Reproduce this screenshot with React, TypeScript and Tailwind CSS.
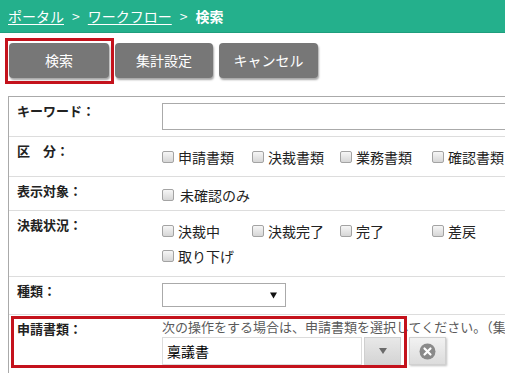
import React from "react";

const FONT = "font-['Noto_Sans_CJK_JP','Noto_Sans',sans-serif]";

function Check({label,w,spaced}:{label:string;w?:string;spaced?:boolean}){
  return (
    <span className={`inline-flex items-center ${w||""}`}>
      <span className="w-[12px] h-[12px] rounded-[2px] border border-[#a3a3a3] bg-gradient-to-b from-[#f6f6f6] to-[#d6d6d6] shrink-0"></span>
      <span className={spaced?"ml-[6px]":"ml-[4px]"}>{label}</span>
    </span>
  );
}

function Row({label,h,children,last}:{label:string;h:string;children:React.ReactNode;last?:boolean}){
  return (
    <div className={`flex ${h} ${last?"":"border-b border-[#dddddd]"}`}>
      <div className="w-[153px] shrink-0 pl-[8px] pt-[6px] text-[13px] leading-[16px] font-bold text-[#222]">{label}</div>
      <div className="flex-1 min-w-0">{children}</div>
    </div>
  );
}

export default function App(){
  return (
    <div className={`relative w-[505px] h-[373px] overflow-hidden bg-white ${FONT} whitespace-nowrap`}>
      <div className="h-[33px] bg-[#24b08c] border-b border-[#1f9e7d] flex items-center pl-[8px] text-[14px] text-white">
        <span className="underline underline-offset-2">ポータル</span>
        <span className="mx-[8px]">&gt;</span>
        <span className="underline underline-offset-2">ワークフロー</span>
        <span className="mx-[8px]">&gt;</span>
        <span className="font-bold">検索</span>
      </div>

      <div className="flex gap-[6px] pl-[9px] pt-[10px]">
        {[["検索","w-[100px]"],["集計設定","w-[98px]"],["キャンセル","w-[99px]"]].map(([t,w])=>(
          <div key={t} className={`${w} h-[35px] rounded-[4px] bg-[#777777] text-white text-[14px] flex items-center justify-center shadow-[1px_2px_2px_rgba(0,0,0,0.35)]`}>{t}</div>
        ))}
      </div>

      <div className="ml-[8px] mt-[18px] w-[620px] border-t border-l border-[#aaaaaa] text-[14px] text-[#222]">
        <Row label="キーワード：" h="h-[40px]">
          <div className="mt-[6px] h-[27px] w-[420px] border border-[#aaaaaa] bg-white"></div>
        </Row>
        <Row label="区　分：" h="h-[40px]">
          <div className="pt-[10px] leading-[20px] flex">
            <Check label="申請書類" w="w-[90px]"/>
            <Check label="決裁書類" w="w-[88px]"/>
            <Check label="業務書類" w="w-[92px]"/>
            <Check label="確認書類"/>
          </div>
        </Row>
        <Row label="表示対象：" h="h-[34px]">
          <div className="pt-[8px] leading-[20px] flex">
            <Check label="未確認のみ" spaced/>
          </div>
        </Row>
        <Row label="決裁状況：" h="h-[66px]">
          <div className="pt-[10px] leading-[20px] flex flex-col gap-[5px]">
            <div className="flex">
              <Check label="決裁中" w="w-[90px]"/>
              <Check label="決裁完了" w="w-[88px]"/>
              <Check label="完了" w="w-[92px]"/>
              <Check label="差戻"/>
            </div>
            <div className="flex">
              <Check label="取り下げ"/>
            </div>
          </div>
        </Row>
        <Row label="種類：" h="h-[38px]">
          <div className="mt-[6px] h-[24px] w-[124px] border border-[#aaaaaa] bg-white flex items-center justify-end pr-[8px]">
            <svg width="7" height="7" viewBox="0 0 7 7"><path d="M0 0.5h7L3.5 6.5z" fill="#111"/></svg>
          </div>
        </Row>
        <Row label="申請書類：" h="h-[60px]" last>
          <div className="pt-[3px] text-[13px] leading-[18px] text-[#5a5a5a]">次の操作をする場合は、申請書類を選択してください。（集計設定）</div>
          <div className="mt-[1px] flex items-start">
            <div className="h-[28px] w-[200px] border border-[#dcdcdc] bg-white pl-[4px] flex items-center text-[14px] text-black">稟議書</div>
            <div className="ml-[2px] h-[28px] w-[37px] bg-gradient-to-b from-[#e8e8e8] to-[#d4d4d4] border border-[#cfcfcf] flex items-center justify-center">
              <svg width="8" height="6" viewBox="0 0 8 6"><path d="M0 0h8L4 6z" fill="#6a6a6a"/></svg>
            </div>
            <div className="ml-[8px] h-[28px] w-[37px] bg-gradient-to-b from-[#f2f2f2] to-[#dcdcdc] border border-[#d0d0d0] shadow-[1px_1px_2px_rgba(0,0,0,0.25)] flex items-center justify-center">
              <svg width="17" height="17" viewBox="0 0 17 17">
                <circle cx="8.5" cy="8.5" r="8" fill="#8a8a8a"/>
                <path d="M5.5 5.5l6 6M11.5 5.5l-6 6" stroke="#fff" strokeWidth="2.2" strokeLinecap="round"/>
              </svg>
            </div>
          </div>
        </Row>
      </div>

      <div className="absolute left-[5px] top-[38px] w-[109px] h-[46px] border-[3px] border-[#c4121c] pointer-events-none"></div>
      <div className="absolute left-[11px] top-[316px] w-[396px] h-[52px] border-[3px] border-[#c4121c] pointer-events-none"></div>
    </div>
  );
}
